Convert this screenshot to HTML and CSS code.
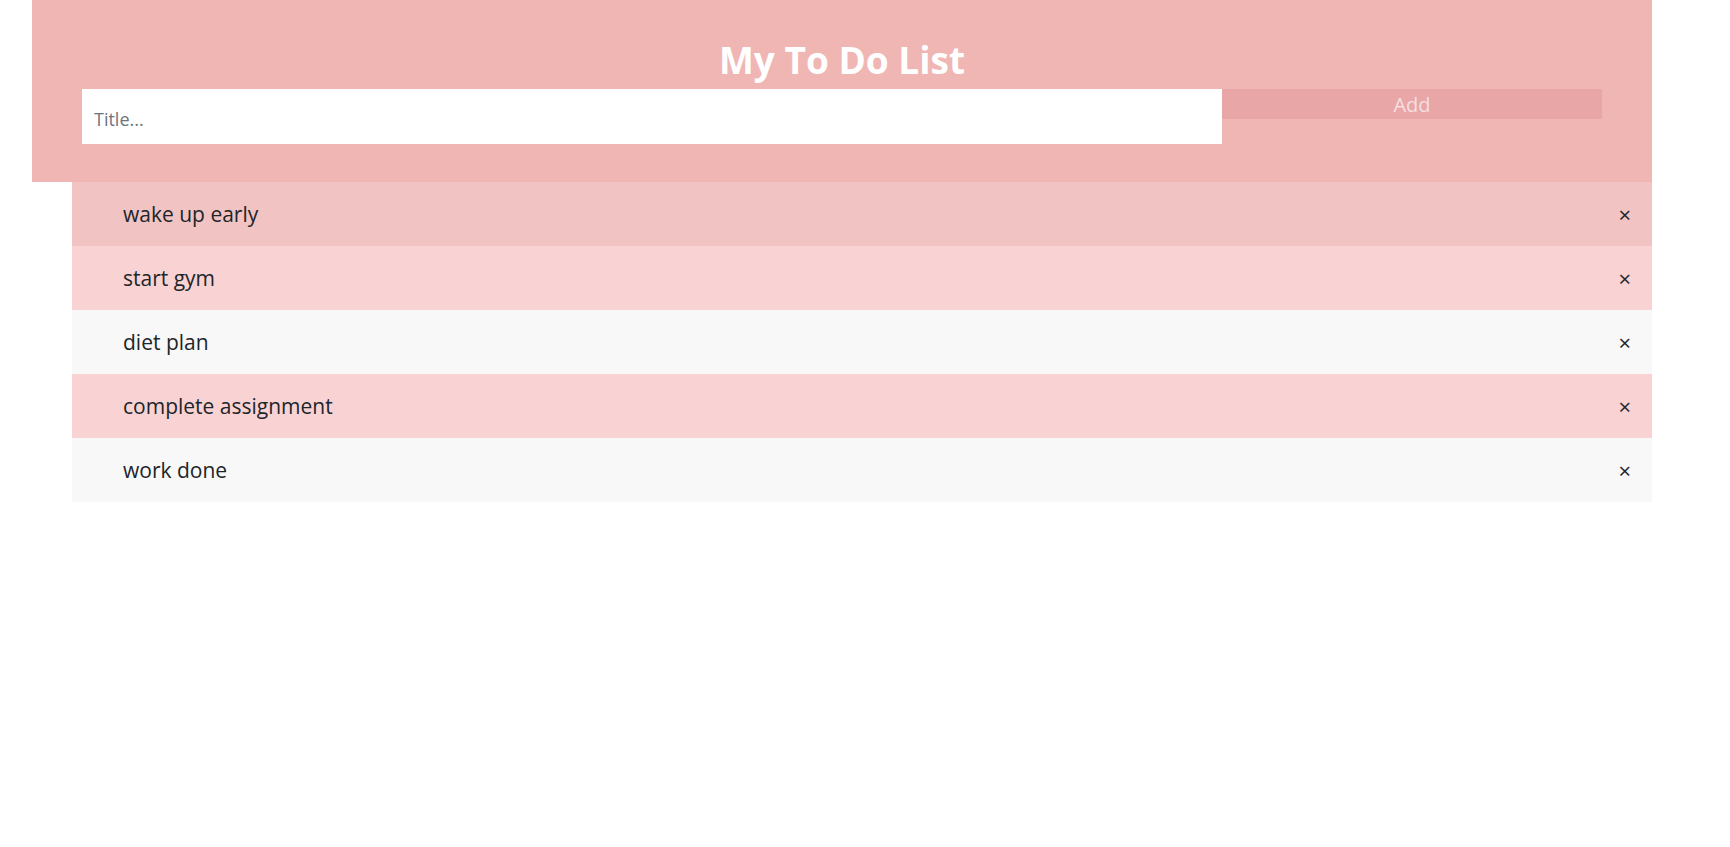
FILE: index.html
```html
<!DOCTYPE html>
<html lang="en">
<head>
<meta charset="utf-8">
<title>My To Do List</title>
<link rel="stylesheet" href="styles.css">
</head>
<body>
<div class="app">
  <div class="header">
    <h1 class="title">My To Do List</h1>
    <div class="form">
      <input class="title-input" type="text" placeholder="Title...">
      <span class="add-btn">Add</span>
    </div>
  </div>
  <ul class="list">
    <li class="item item-active"><span class="item-text">wake up early</span><span class="close">×</span></li>
    <li class="item item-pink"><span class="item-text">start gym</span><span class="close">×</span></li>
    <li class="item item-grey"><span class="item-text">diet plan</span><span class="close">×</span></li>
    <li class="item item-pink"><span class="item-text">complete assignment</span><span class="close">×</span></li>
    <li class="item item-grey"><span class="item-text">work done</span><span class="close">×</span></li>
  </ul>
</div>
</body>
</html>
```
FILE: styles.css
```css
html, body {
  margin: 0;
  padding: 0;
  background: #ffffff;
}
body {
  font-family: "Open Sans", "Noto Sans", "Liberation Sans", sans-serif;
  color: #212529;
}
.app {
  margin-left: 32px;
  width: 1620px;
}
.header {
  background: #f0b6b3;
  padding: 36px 50px 38px;
  text-align: center;
  color: #ffffff;
}
.title {
  margin: 0 0 5px;
  font-size: 37px;
  line-height: 48px;
  font-weight: 700;
}
.form {
  display: flex;
  align-items: flex-start;
}
.title-input {
  box-sizing: border-box;
  width: 75%;
  height: 55px;
  margin: 0;
  border: none;
  border-radius: 0;
  padding: 4px 12px 0;
  font-family: inherit;
  font-size: 18px;
  color: #495057;
  background: #ffffff;
  outline: none;
}
.title-input::placeholder {
  color: #6c757d;
}
.add-btn {
  box-sizing: border-box;
  width: 25%;
  height: 30px;
  padding-top: 2px;
  line-height: 28px;
  background: #e8a6a7;
  color: #f6dfe0;
  text-align: center;
  font-size: 20px;
}
.list {
  margin: 0;
  padding: 0 0 0 40px;
  list-style: none;
}
.item {
  display: flex;
  align-items: center;
  justify-content: space-between;
  height: 64px;
  padding: 0 21px 0 51px;
  font-size: 21px;
}
.item-active {
  background: #f1c3c3;
}
.item-pink {
  background: #f9d3d4;
}
.item-grey {
  background: #f8f8f8;
}
.close {
  font-size: 22px;
  color: #212529;
}
```
